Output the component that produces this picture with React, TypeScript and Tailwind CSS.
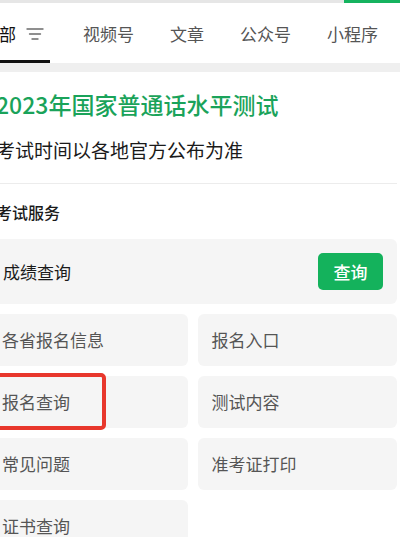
import React from "react";

const CELLS = ["各省报名信息", "报名入口", "报名查询", "测试内容", "常见问题", "准考证打印", "证书查询"];

function FilterIcon() {
  return (
    <svg width="18" height="14" viewBox="0 0 18 14" className="shrink-0">
      <g stroke="#6b6b6b" strokeWidth="1.4" strokeLinecap="round">
        <line x1="1" y1="2" x2="17" y2="2" />
        <line x1="3.5" y1="7" x2="14.5" y2="7" />
        <line x1="6" y1="12" x2="12" y2="12" />
      </g>
    </svg>
  );
}

export default function App() {
  return (
    <div
      className="w-[400px] h-[537px] overflow-hidden bg-white"
      style={{ fontFamily: '"Noto Sans CJK SC", "Noto Sans", sans-serif' }}
    >
      {/* search bar edge */}
      <div className="flex h-[3px]">
        <div className="w-[344px] bg-[#e6e6e6]" />
        <div className="flex-1 bg-[#15b35f]" />
      </div>

      {/* tabs */}
      <div className="flex items-end h-[60px] ml-[-18px]">
        <div className="relative flex items-center h-full">
          <span className="text-[17px] text-[#111] leading-none">全部</span>
          <span className="ml-[10px] mt-[1px]"><FilterIcon /></span>
          <div className="absolute left-0 bottom-0 h-[3px] w-[68px] bg-[#111]" />
        </div>
        <div className="flex items-center h-full text-[17px] text-[#555] leading-none whitespace-nowrap">
          <span className="ml-[39px]">视频号</span>
          <span className="ml-[36px]">文章</span>
          <span className="ml-[36px]">公众号</span>
          <span className="ml-[36px]">小程序</span>
        </div>
      </div>
      <div className="h-[9px] bg-[#efefef]" />

      {/* result card */}
      <div className="ml-[-4px] mr-[3px]">
        <div className="pt-[17px] text-[23px] leading-[30px] font-medium text-[#1aa35a]">2023年国家普通话水平测试</div>
        <div className="mt-[19px] text-[19px] leading-[24px] text-[#1a1a1a]">考试时间以各地官方公布为准</div>
        <div className="mt-[21px] h-px bg-[#ececec]" />
        <div className="mt-[18px] text-[16px] leading-[20px] font-medium text-[#1a1a1a]">考试服务</div>
      </div>

      <div className="ml-[-12px] mr-[3px] mt-[17px] flex flex-col gap-[10px]">
        <div className="flex items-center justify-between h-[65px] rounded-[6px] bg-[#f5f5f5] pl-[15px] pr-[14px]">
          <span className="text-[17px] text-[#1a1a1a]">成绩查询</span>
          <span className="flex items-center justify-center w-[65px] h-[37px] rounded-[5px] bg-[#14b25c] text-white text-[17px] font-medium">
            查询
          </span>
        </div>
        <div className="grid grid-cols-2 gap-x-[10px] gap-y-[10px]">
          {CELLS.map((c) => (
            <div key={c} className="relative flex items-center h-[52px] rounded-[6px] bg-[#f5f5f5] pl-[14px]">
              <span className="text-[17px] text-[#555]">{c}</span>
              {c === "报名查询" && (
                <div className="absolute left-[-6px] top-[-3px] w-[124px] h-[57px] border-[4px] border-[#e8372c] rounded-[5px]" />
              )}
            </div>
          ))}
        </div>
      </div>
    </div>
  );
}
